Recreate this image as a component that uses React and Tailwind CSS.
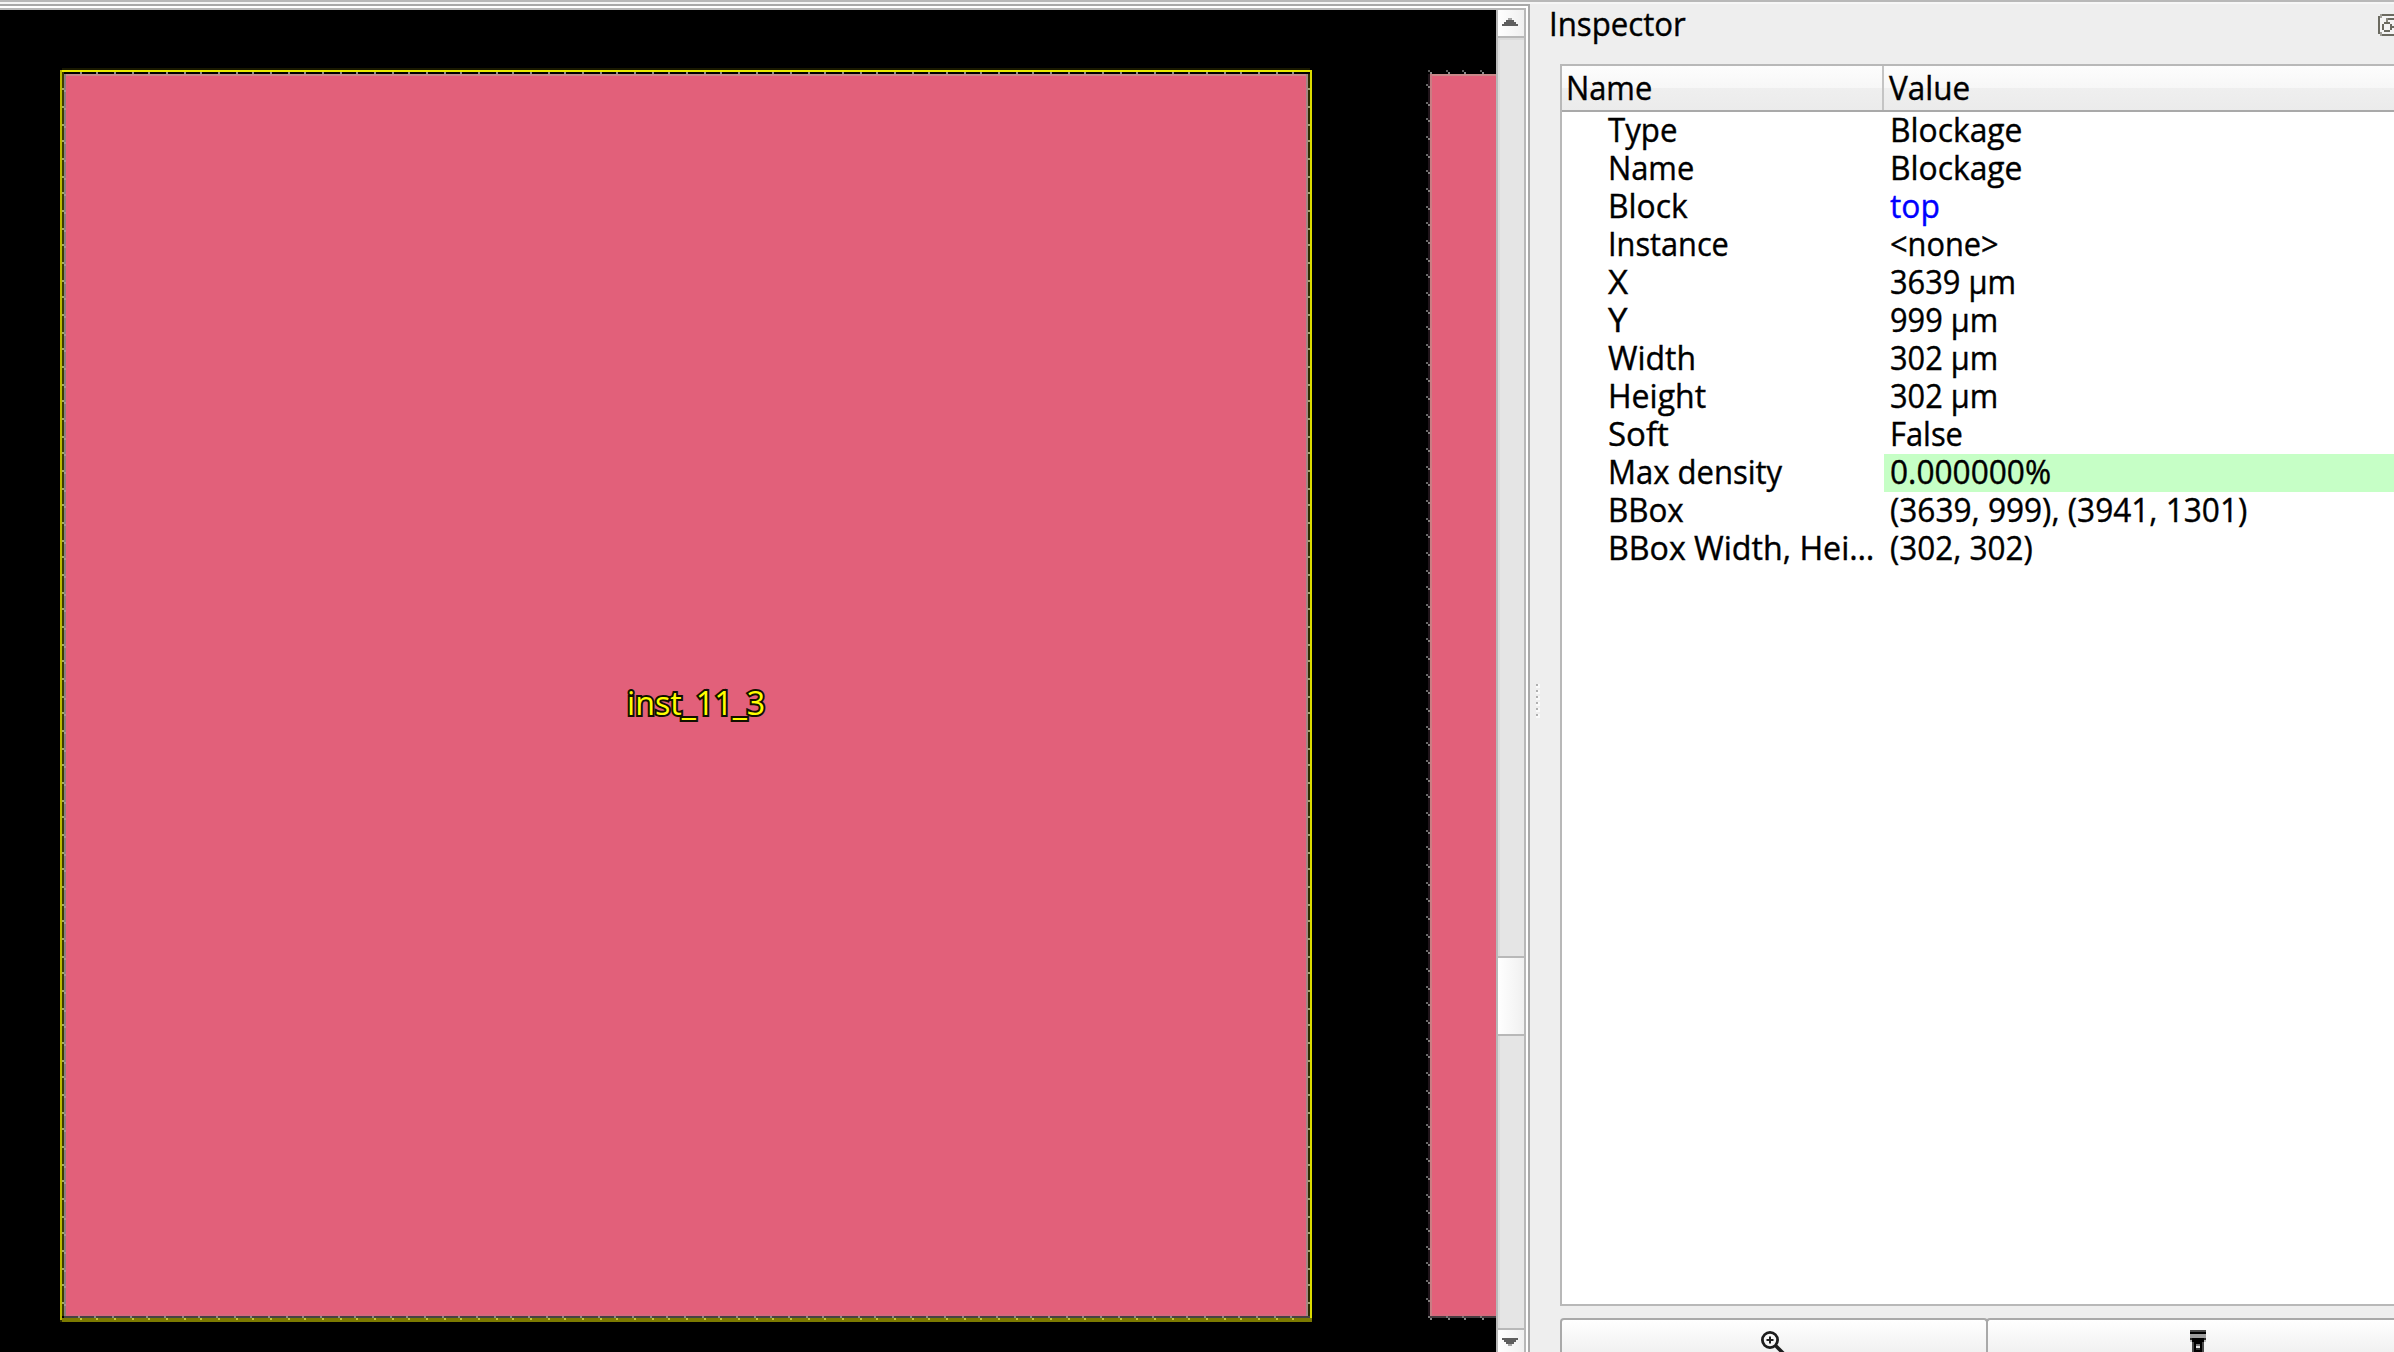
import { useLayoutEffect, useRef } from "react";

const PINK = "#e2607a";
const PERIOD = 52;

/* One line of text, condensed or widened horizontally to the given advance. */
function Label({ w, className = "[-webkit-text-stroke:0.4px_currentColor]", children }) {
  const ref = useRef(null);
  useLayoutEffect(() => {
    const el = ref.current;
    const natural = el.offsetWidth;
    if (natural) el.style.transform = `scaleX(${w / natural})`;
  }, [w]);
  return (
    <span ref={ref} className={`block w-max origin-left whitespace-pre ${className}`}>
      {children}
    </span>
  );
}

function ticks(start, end, offsets) {
  const out = [];
  for (let base = start; base < end; base += PERIOD) {
    for (const o of offsets) if (base + o < end) out.push(base + o);
  }
  return out;
}

function LayoutCanvas() {
  const topTicks = ticks(80, 1306, [0, 16, 34]);
  const sideTicks = ticks(88, 1314, [0, 18, 36]);
  const bottomTicks = ticks(80, 1308, [0, 16, 34]);
  const blockTicks = ticks(86, 1314, [0, 18, 34]);
  return (
    <svg className="block h-full w-[1496px]" viewBox="0 10 1496 1342" shapeRendering="crispEdges">
      <rect x="0" y="10" width="1496" height="1342" fill="#000" />

      {/* selected blockage */}
      <rect x="66" y="76" width="1240" height="1240" fill={PINK} />
      <rect x="62" y="68" width="1248" height="2" fill="#181800" />
      <rect x="60" y="70" width="2" height="1250" fill="#baba00" />
      <rect x="62" y="70" width="1248" height="2" fill="#eaea00" />
      <rect x="1310" y="70" width="2" height="1252" fill="#dcdc00" />
      <rect x="62" y="72" width="2" height="1244" fill="#3c3c00" />
      <rect x="1308" y="74" width="2" height="1242" fill="#2c2c00" />
      <rect x="64" y="74" width="1242" height="2" fill="#c98889" />
      <rect x="64" y="74" width="2" height="1242" fill="#878080" />
      <rect x="1306" y="74" width="2" height="1242" fill="#a58784" />
      <rect x="66" y="1314" width="1240" height="2" fill="#d9677c" />
      <rect x="64" y="1316" width="1246" height="2" fill="#454343" />
      <rect x="62" y="1318" width="1250" height="4" fill="#7c7a00" />
      <rect x="60" y="1320" width="2" height="2" fill="#2c2c00" />
      {topTicks.map((x) => (
        <rect key={x} x={x} y="72" width="2" height="2" fill="#8c8c8c" />
      ))}
      {sideTicks.map((y) => (
        <g key={y}>
          <rect x="62" y={y} width="2" height="2" fill="#a8a860" />
          <rect x="64" y={y + 2} width="2" height="2" fill="#a09a9a" />
          <rect x="1308" y={y} width="2" height="2" fill="#a0a070" />
        </g>
      ))}
      {bottomTicks.map((x) => (
        <g key={x}>
          <rect x={x - 2} y="1316" width="2" height="2" fill="#8c8c8c" />
          <rect x={x} y="1318" width="2" height="2" fill="#c4c43c" />
        </g>
      ))}

      {/* neighbouring blockage, cut by the view edge */}
      <rect x="1432" y="76" width="64" height="1240" fill={PINK} />
      <rect x="1428" y="74" width="2" height="1242" fill="#20141a" />
      <rect x="1430" y="74" width="2" height="1242" fill="#c87d84" />
      <rect x="1432" y="74" width="64" height="2" fill="#c98889" />
      <rect x="1432" y="1314" width="64" height="2" fill="#d9677c" />
      <rect x="1430" y="1316" width="66" height="2" fill="#453c40" />
      {blockTicks.map((y) => (
        <g key={y}>
          <rect x="1426" y={y - 2} width="2" height="2" fill="#686868" />
          <rect x="1428" y={y} width="2" height="2" fill="#858080" />
        </g>
      ))}
      {[1430, 1448, 1464, 1482].map((x) => (
        <g key={x}>
          <rect x={x - 2} y="70" width="2" height="2" fill="#5c5c5c" />
          <rect x={x} y="72" width="2" height="2" fill="#8c8c8c" />
          <rect x={x} y="1318" width="2" height="2" fill="#858585" />
          <rect x={x - 2} y="1316" width="2" height="2" fill="#777777" />
        </g>
      ))}
    </svg>
  );
}

function ScrollBar() {
  return (
    <div className="flex w-[30px] shrink-0 flex-col border-x-2 border-[#b8b8b8]">
      <div className="h-[26px] shrink-0 bg-linear-to-r from-white to-[#f0f0f0]">
        <svg className="block h-[26px] w-[26px]" viewBox="0 0 26 26" shapeRendering="crispEdges" fill="#5e5e5e">
          <rect x="10" y="8" width="4" height="2" fill="#a4a4a4" />
          <rect x="8" y="10" width="8" height="2" />
          <rect x="6" y="12" width="12" height="2" />
          <rect x="4" y="14" width="16" height="2" />
        </svg>
      </div>
      <div className="h-[2px] shrink-0 bg-[#b8b8b8]" />
      <div className="h-[918px] shrink-0 border-t-2 border-l-2 border-[#dbdbdb] bg-[#e5e5e5]" />
      <div className="h-[80px] shrink-0 border-y-2 border-[#b8b8b8] bg-linear-to-r from-white to-[#f0f0f0]" />
      <div className="h-[292px] shrink-0 border-l-2 border-[#dbdbdb] bg-[#e5e5e5]" />
      <div className="h-[2px] shrink-0 bg-[#b8b8b8]" />
      <div className="flex-1 bg-linear-to-r from-white to-[#f0f0f0]">
        <svg className="block h-[22px] w-[26px]" viewBox="0 0 26 22" shapeRendering="crispEdges" fill="#5e5e5e">
          <rect x="4" y="8" width="16" height="2" />
          <rect x="6" y="10" width="12" height="2" />
          <rect x="8" y="12" width="8" height="2" />
          <rect x="10" y="14" width="4" height="2" fill="#a4a4a4" />
        </svg>
      </div>
    </div>
  );
}

const properties = [
  { name: "Type", nw: 69, value: "Blockage", vw: 132 },
  { name: "Name", nw: 86, value: "Blockage", vw: 132 },
  { name: "Block", nw: 80, value: "top", vw: 50, link: true },
  { name: "Instance", nw: 121, value: "<none>", vw: 109 },
  { name: "X", nw: 20, value: "3639 µm", vw: 126 },
  { name: "Y", nw: 19, value: "999 µm", vw: 108 },
  { name: "Width", nw: 88, value: "302 µm", vw: 108 },
  { name: "Height", nw: 98, value: "302 µm", vw: 108 },
  { name: "Soft", nw: 61, value: "False", vw: 73 },
  { name: "Max density", nw: 174, value: "0.000000%", vw: 161, editable: true },
  { name: "BBox", nw: 76, value: "(3639, 999), (3941, 1301)", vw: 357 },
  { name: "BBox Width, Hei…", nw: 266, value: "(302, 302)", vw: 143 },
];

function FloatIcon() {
  return (
    <svg className="block h-[22px] w-4" viewBox="0 0 16 22" shapeRendering="crispEdges" fill="#6b6a60">
      <rect x="4" y="0" width="12" height="2" />
      <rect x="2" y="2" width="14" height="18" fill="#f4f4f4" />
      <rect x="0" y="2" width="2" height="18" />
      <rect x="4" y="20" width="12" height="2" />
      <rect x="2" y="0" width="2" height="2" fill="#a09f98" />
      <rect x="2" y="20" width="2" height="2" fill="#a09f98" />
      <rect x="2" y="2" width="2" height="2" fill="#a09f98" />
      <rect x="2" y="18" width="2" height="2" fill="#a09f98" />
      <rect x="10" y="4" width="6" height="2" />
      <rect x="8" y="4" width="2" height="4" fill="#8a897f" />
      <rect x="6" y="8" width="6" height="2" />
      <rect x="4" y="10" width="2" height="6" />
      <rect x="12" y="10" width="2" height="6" />
      <rect x="6" y="16" width="6" height="2" />
      <rect x="14" y="12" width="2" height="2" />
    </svg>
  );
}

function ZoomIcon() {
  return (
    <svg className="block h-[22px] w-[24px]" viewBox="0 0 24 22" fill="none" stroke="#1c1c1c">
      <circle cx="9" cy="9" r="7.6" strokeWidth="2.8" />
      <path d="M9 5.5v7M5.5 9h7" strokeWidth="2" />
      <path d="M14.5 14.5L24 24" strokeWidth="3.6" />
    </svg>
  );
}

function HighlightIcon() {
  return (
    <svg className="block h-[22px] w-4" viewBox="0 0 16 22" shapeRendering="crispEdges">
      <rect width="16" height="2" fill="#4a4a4a" />
      <rect y="2" width="16" height="2" fill="#000" />
      <rect y="4" width="16" height="4" fill="#9e9e9e" />
      <rect y="8" width="16" height="2" fill="#2a2a2a" />
      <rect y="10" width="16" height="2" fill="#bdbdbd" />
      <rect x="2" y="8" width="12" height="4" fill="#000" />
      <rect x="2" y="12" width="12" height="10" fill="#4a4a4a" />
      <rect x="4" y="12" width="8" height="10" fill="#000" />
      <rect x="6" y="14" width="4" height="2" fill="#777" />
      <rect x="6" y="16" width="4" height="2" fill="#e4e4e4" />
      <rect x="6" y="18" width="4" height="2" fill="#333" />
    </svg>
  );
}

function Splitter() {
  return (
    <div className="flex w-[30px] shrink-0 flex-col gap-[2px] pt-[678px] pl-[6px]">
      {[0, 1, 2, 3, 4, 5].map((i) => (
        <div key={i} className="h-1 w-1 bg-[#f9f9f9]">
          <div className="h-[2px] w-[2px] bg-[#b0b0b0]" />
        </div>
      ))}
    </div>
  );
}

export default function App() {
  return (
    <div className="flex h-[1352px] w-[2394px] flex-col overflow-hidden bg-[#eeeeee] font-['Open_Sans','Noto_Sans',sans-serif] text-[33px] leading-[38px] text-black">
      <div className="h-[2px] shrink-0 bg-[#b8b8b8]" />
      <div className="h-[2px] shrink-0 bg-[#f6f6f6]" />
      <div className="flex min-h-0 flex-1">
        <div className="flex w-[1530px] shrink-0 border-t-2 border-r-2 border-[#a9a9a9]">
          <div className="flex w-[1528px] border-t-2 border-r-2 border-white">
            <div className="relative flex w-[1526px] border-t-2 border-[#b8b8b8]">
              <LayoutCanvas />
              <span className="absolute top-[674px] left-[627px] text-[#ffff00] [-webkit-text-stroke:4px_#101000] [paint-order:stroke_fill]">
                <Label w={138} className="text-[32px]">inst_11_3</Label>
              </span>
              <ScrollBar />
            </div>
          </div>
        </div>

        <div className="flex min-w-0 flex-1 pt-[2px]">
          <Splitter />
          <div className="flex min-w-0 flex-1 flex-col">
            <div className="-ml-[11px] flex h-[58px] shrink-0 items-start justify-between">
              <div className="-mt-px">
                <Label w={137}>Inspector</Label>
              </div>
              <div className="pt-2">
                <FloatIcon />
              </div>
            </div>

            <div className="flex h-[1242px] shrink-0 flex-col border-y-2 border-l-2 border-[#b8b8b8] bg-white">
              <div className="flex h-[46px] shrink-0 border-b-2 border-[#a9a9a9] bg-[linear-gradient(#fdfdfd,#f7f7f7_50%,#efefef_50%,#ebebeb)]">
                <div className="w-[322px] shrink-0 border-r-2 border-[#c4c4c4] pt-[3px] pl-1">
                  <Label w={86}>Name</Label>
                </div>
                <div className="pt-[3px] pl-[5px]">
                  <Label w={81}>Value</Label>
                </div>
              </div>
              {properties.map((p, i) => (
                <div key={i} className="flex h-[38px] shrink-0">
                  <div className="w-[322px] shrink-0 pl-[46px]">
                    <div className="-mt-px">
                      <Label w={p.nw}>{p.name}</Label>
                    </div>
                  </div>
                  <div className={`flex-1 pl-[6px] ${p.editable ? "bg-[#c6ffc6]" : ""} ${p.link ? "text-[#0000ff]" : ""}`}>
                    <div className="-mt-px">
                      <Label w={p.vw}>{p.value}</Label>
                    </div>
                  </div>
                </div>
              ))}
            </div>

            <div className="mt-3 flex min-h-0 flex-1">
              <div className="flex w-[428px] shrink-0 rounded-t-[4px] border-x-2 border-t-2 border-[#a9a9a9] bg-linear-to-b from-white to-[#f1f1f1] pt-[11px] pl-[199px]">
                <ZoomIcon />
              </div>
              <div className="-ml-[2px] flex flex-1 rounded-tl-[4px] border-t-2 border-l-2 border-[#a9a9a9] bg-linear-to-b from-white to-[#f1f1f1] pt-[10px] pl-[202px]">
                <HighlightIcon />
              </div>
            </div>
          </div>
        </div>
      </div>
    </div>
  );
}
